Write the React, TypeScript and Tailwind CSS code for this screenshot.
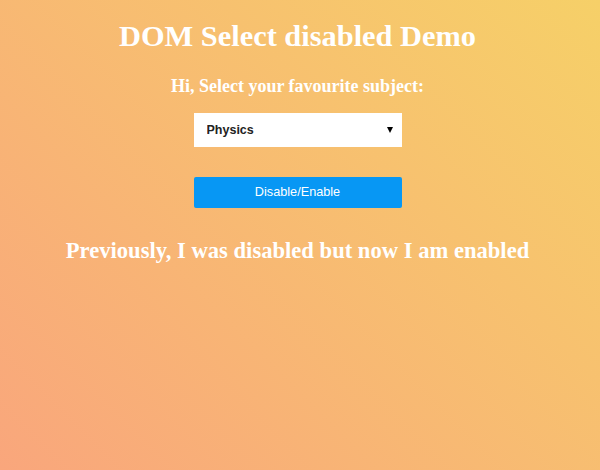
import { useState } from "react";

export default function App() {
    const [disabled, setDisabled] = useState(false);

    return (
        <div className="w-[600px] h-[470px] pr-[5px] bg-[linear-gradient(45deg,#f9a67c,#f6d068)] flex flex-col items-center text-white font-['Liberation_Serif',serif]">
            <h1 className="mt-[18px] text-[30.4px] leading-[36px] font-bold">DOM Select disabled Demo</h1>
            <h3 className="mt-[21px] text-[18px] leading-[22px] font-bold">Hi, Select your favourite subject:</h3>
            <div className="mt-[16px] relative w-[208px] h-[34px] bg-white">
                <select
                    disabled={disabled}
                    className="appearance-none w-full h-full bg-transparent pl-[13px] text-[12.5px] font-bold text-[#222] font-['Liberation_Sans',Arial,sans-serif] outline-none"
                >
                    <option>Physics</option>
                    <option>Chemistry</option>
                    <option>Mathematics</option>
                </select>
                <svg className="absolute right-[9px] top-[14px] pointer-events-none" width="6" height="6" viewBox="0 0 6 6">
                    <path d="M0 0 L6 0 L3 6 Z" fill="#000" />
                </svg>
            </div>
            <button
                onClick={() => setDisabled(!disabled)}
                className="mt-[30px] w-[208px] h-[31px] bg-[#0797f4] rounded-[2px] text-[12.7px] text-white font-['Liberation_Sans',Arial,sans-serif]"
            >
                Disable/Enable
            </button>
            <h2 className="mt-[29px] text-[22.6px] leading-[28px] font-bold">
                {disabled ? "I am disabled now" : "Previously, I was disabled but now I am enabled"}
            </h2>
        </div>
    );
}
